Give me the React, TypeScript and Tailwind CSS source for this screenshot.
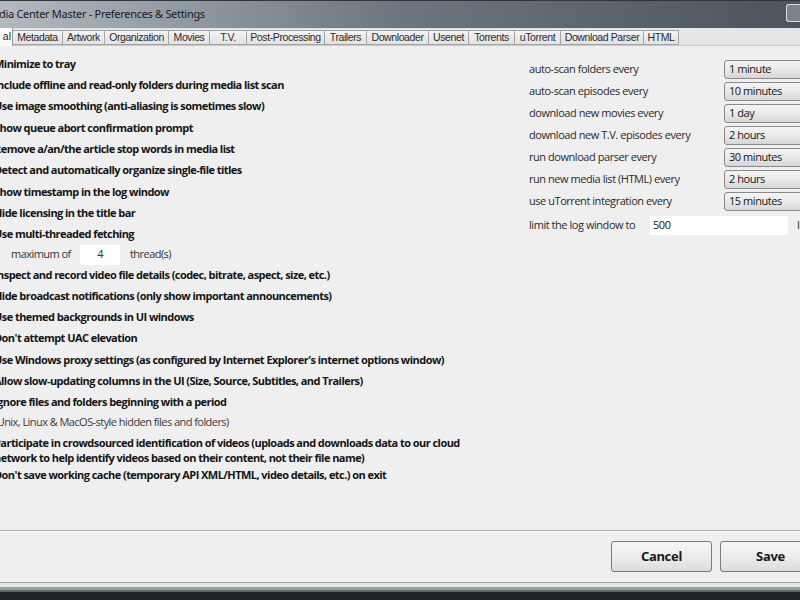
import React from "react";

const tabs = [
  { label: "al", w: "w-[13px]", active: true },
  { label: "Metadata", w: "w-[50px]" },
  { label: "Artwork", w: "w-[42px]" },
  { label: "Organization", w: "w-[64px]" },
  { label: "Movies", w: "w-[41px]" },
  { label: "T.V.", w: "w-[37px]" },
  { label: "Post-Processing", w: "w-[78px]" },
  { label: "Trailers", w: "w-[42px]" },
  { label: "Downloader", w: "w-[62px]" },
  { label: "Usenet", w: "w-[40px]" },
  { label: "Torrents", w: "w-[46px]" },
  { label: "uTorrent", w: "w-[46px]" },
  { label: "Download Parser", w: "w-[83px]" },
  { label: "HTML", w: "w-[35px]" },
];

const topOptions = [
  "Minimize to tray",
  "Include offline and read-only folders during media list scan",
  "Use image smoothing (anti-aliasing is sometimes slow)",
  "Show queue abort confirmation prompt",
  "Remove a/an/the article stop words in media list",
  "Detect and automatically organize single-file titles",
  "Show timestamp in the log window",
  "Hide licensing in the title bar",
  "Use multi-threaded fetching",
];

const midOptions = [
  "Inspect and record video file details (codec, bitrate, aspect, size, etc.)",
  "Hide broadcast notifications (only show important announcements)",
  "Use themed backgrounds in UI windows",
  "Don't attempt UAC elevation",
  "Use Windows proxy settings (as configured by Internet Explorer's internet options window)",
  "Allow slow-updating columns in the UI (Size, Source, Subtitles, and Trailers)",
  "Ignore files and folders beginning with a period",
];

const schedules = [
  ["auto-scan folders every", "1 minute"],
  ["auto-scan episodes every", "10 minutes"],
  ["download new movies every", "1 day"],
  ["download new T.V. episodes every", "2 hours"],
  ["run download parser every", "30 minutes"],
  ["run new media list (HTML) every", "2 hours"],
  ["use uTorrent integration every", "15 minutes"],
];

const Option = ({ text }: { text: string }) => (
  <div className="h-[21.3px] flex items-center font-bold text-[#141414] whitespace-nowrap">
    {text}
  </div>
);

const Dropdown = ({ value }: { value: string }) => (
  <div className="w-[100px] h-[19px] shrink-0 flex items-center pl-[4px] rounded-[3px] border border-[#8a8a8a] bg-linear-to-b from-[#f4f4f4] via-[#e9e9e9] to-[#d6d6d6] text-[#151515]">
    {value}
  </div>
);

const WinButton = ({ label }: { label: string }) => (
  <button className="w-[101px] h-[31px] shrink-0 rounded-[3px] border border-[#7a7a7a] bg-linear-to-b from-[#f6f6f6] via-[#ececec] to-[#dcdcdc] text-[13px] tracking-[-0.3px] font-bold text-[#1a1a1a]">
    {label}
  </button>
);

export default function App() {
  return (
    <div className="w-[800px] h-[600px] overflow-hidden flex flex-col bg-[#efefef] text-[11px] font-['Open_Sans','Noto_Sans',sans-serif]">
      {/* title bar */}
      <div className="h-[28px] shrink-0 flex items-center justify-between border-t border-[#30373c] bg-linear-to-r from-[#b2b9bf] via-[#6d767e] to-[#4c555c]">
        <span className="text-[11px] tracking-[-0.3px] text-[#161b1f] font-['Noto_Sans',sans-serif] -ml-[1px]">
          dia Center Master - Preferences &amp; Settings
        </span>
        <div className="w-[14px] h-[18px] mb-[4px] rounded-l-[3px] border border-r-0 border-[#d9dde0] bg-[#7c858c]" />
      </div>

      {/* tabs */}
      <div className="h-[18px] shrink-0 flex items-end bg-[#e4e6e8] border-b border-[#c8c8c8]">
        {tabs.map((t) => (
          <div
            key={t.label}
            className={
              t.active
                ? `${t.w} h-[18px] shrink-0 flex items-center justify-end pr-[1px] bg-[#fbfbfb] border-r border-[#9a9a9a] -mb-[1px] text-[10.5px] text-[#222] font-['Liberation_Sans',sans-serif]`
                : `${t.w} h-[15px] shrink-0 flex items-center justify-center border border-l-0 border-[#a4a4a4] bg-linear-to-b from-[#f3f3f3] to-[#e2e2e2] text-[10.5px] tracking-[-0.4px] text-[#2a2a2a] font-['Liberation_Sans',sans-serif]`
            }
          >
            {t.label}
          </div>
        ))}
      </div>

      {/* panel */}
      <div className="flex-1 flex">
        <div className="w-[535px] shrink-0 pt-[7.5px] -ml-[6px] tracking-[-0.55px]">
          {topOptions.map((o) => (
            <Option key={o} text={o} />
          ))}
          <div className="h-[19px] flex items-center pl-[17px] text-[#333] whitespace-nowrap">
            <span className="w-[69px] shrink-0">maximum of</span>
            <div className="w-[40px] h-[20px] flex items-center justify-center bg-white">4</div>
            <span className="ml-[10px]">thread(s)</span>
          </div>
          {midOptions.map((o) => (
            <Option key={o} text={o} />
          ))}
          <div className="h-[18px] flex items-center text-[#3a3a3a] whitespace-nowrap">
            (Unix, Linux &amp; MacOS-style hidden files and folders)
          </div>
          <div className="pt-[3.5px] leading-[15px] font-bold text-[#141414]">
            <div className="whitespace-nowrap">
              Participate in crowdsourced identification of videos (uploads and downloads data to our cloud
            </div>
            <div className="whitespace-nowrap">
              network to help identify videos based on their content, not their file name)
            </div>
          </div>
          <Option text="Don't save working cache (temporary API XML/HTML, video details, etc.) on exit" />
        </div>

        <div className="flex-1 pt-[12px] text-[#2a2a2a] tracking-[-0.45px]">
          {schedules.map(([label, value]) => (
            <div key={label} className="h-[22px] flex items-center whitespace-nowrap">
              <span className="w-[195px] shrink-0">{label}</span>
              <Dropdown value={value} />
            </div>
          ))}
          <div className="h-[27px] flex items-center whitespace-nowrap">
            <span className="w-[121px] shrink-0">limit the log window to</span>
            <div className="w-[138px] h-[19px] shrink-0 flex items-center pl-[3px] bg-white text-[#151515]">500</div>
            <span className="ml-[9px]">lines</span>
          </div>
        </div>
      </div>

      {/* footer */}
      <div className="h-[52px] shrink-0 border-t border-[#a9a9a9] bg-[#efefef] shadow-[inset_0_1px_0_#ffffff]">
        <div className="flex gap-[8px] ml-[611px] mt-[10px] font-['Noto_Sans',sans-serif]">
          <WinButton label="Cancel" />
          <WinButton label="Save" />
        </div>
      </div>

      {/* window frame bottom */}
      <div className="h-[18px] shrink-0 flex flex-col">
        <div className="h-[1px] bg-[#9a9a9a]" />
        <div className="h-[4px] bg-[#e4e7e8]" />
        <div className="h-[3px] bg-[#9aa1a4]" />
        <div className="h-[2px] bg-[#5d6467]" />
        <div className="flex-1 bg-[#1e2426]" />
      </div>
    </div>
  );
}
